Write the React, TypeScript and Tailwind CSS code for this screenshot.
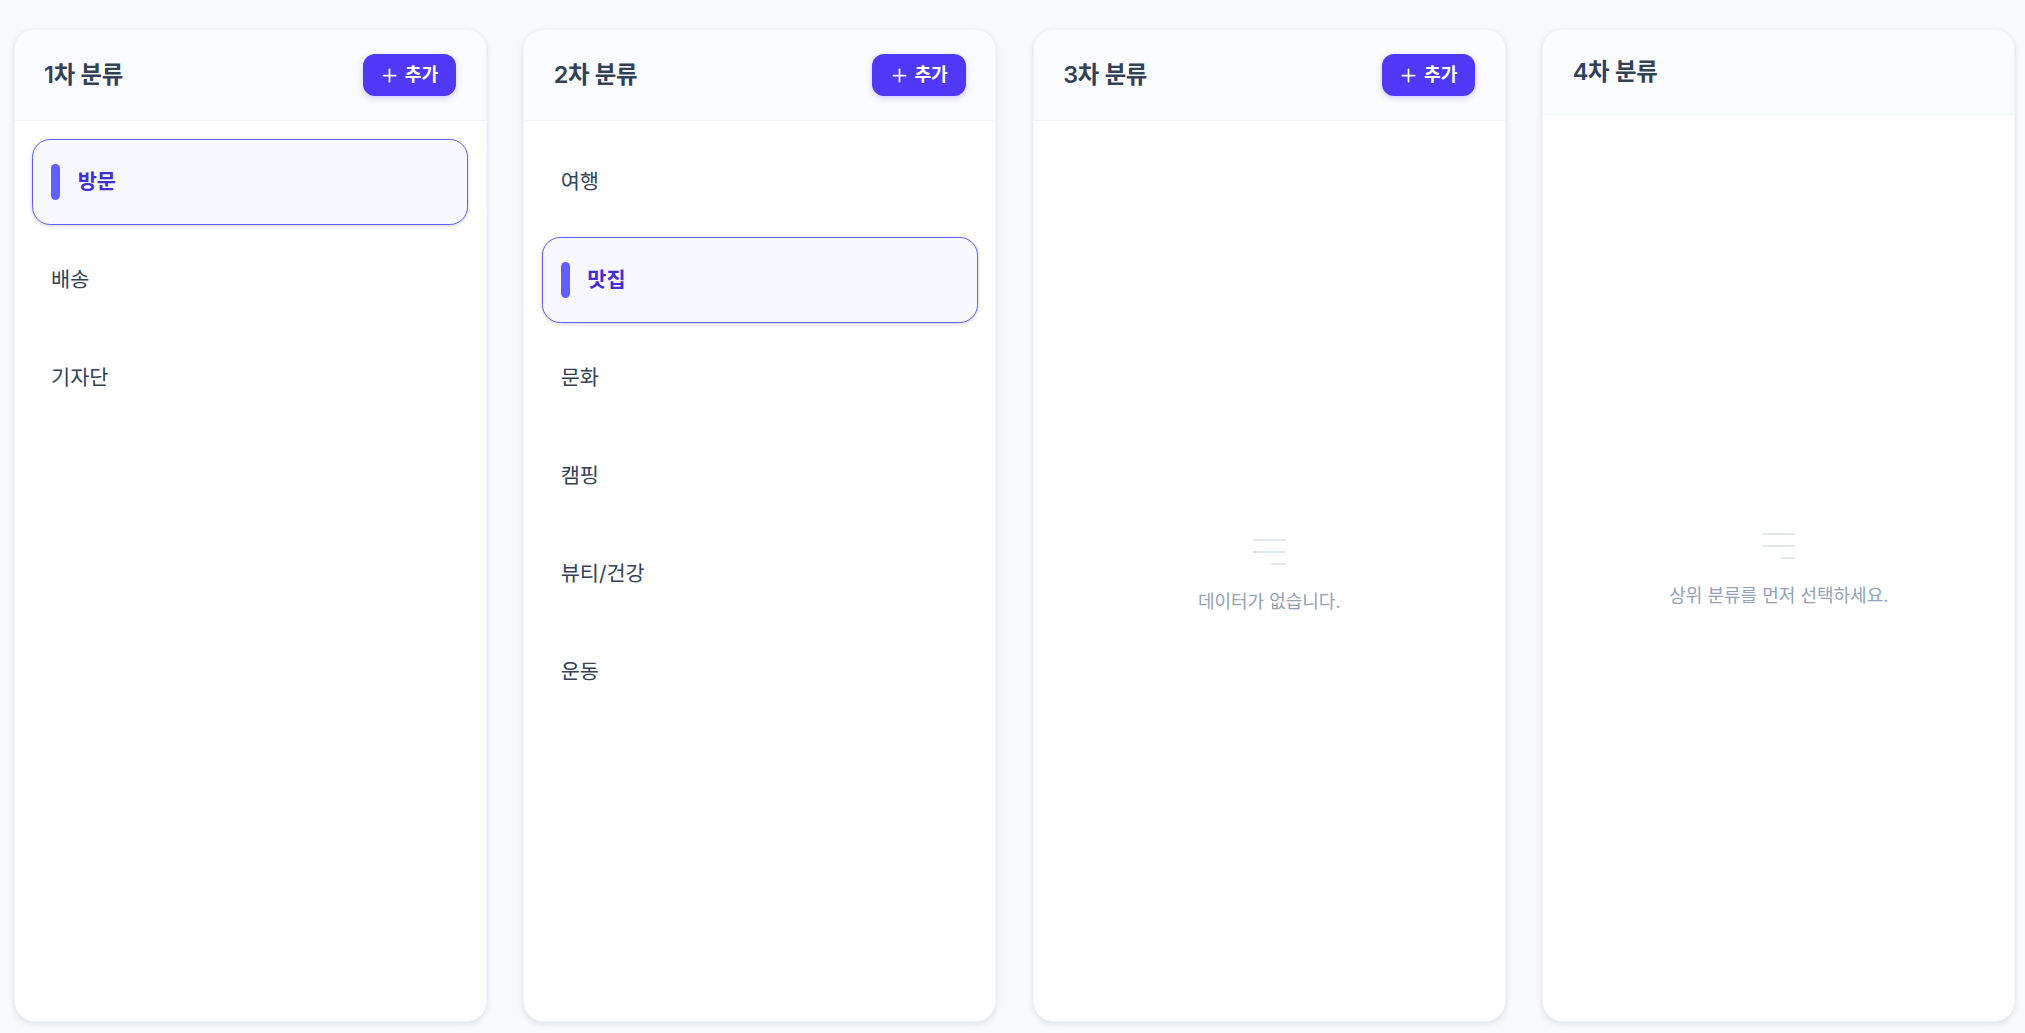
import { Plus } from 'lucide-react';

interface ColumnProps {
  title: string;
  items?: string[];
  selected?: string;
  emptyText?: string;
  canAdd?: boolean;
}

function EmptyIcon() {
  return (
    <svg width="48" height="48" viewBox="0 0 48 48" fill="none" stroke="#e2e8f0" strokeWidth="2">
      <path d="M8 12H40" />
      <path d="M8 24H40" />
      <path d="M26 36H40" />
    </svg>
  );
}

function Column({ title, items = [], selected, emptyText, canAdd = true }: ColumnProps) {
  return (
    <div className="flex h-full w-[473.2px] shrink-0 flex-col overflow-hidden rounded-[20.8px] border border-[#f1f5f9] bg-white shadow-[0_2px_6px_rgba(15,23,42,0.12)]">
      {/* Header */}
      <div
        className={`flex shrink-0 items-center justify-between border-b border-[#f1f5f9] bg-[#fbfcfe] px-[29.6px] ${
          canAdd ? 'h-[91px]' : 'h-[85px]'
        }`}
      >
        <h2 className="text-[23.4px] leading-[32px] font-semibold tracking-[-0.3px] text-[#314158]">{title}</h2>
        {canAdd && (
          <button className="flex h-[42px] w-[93.6px] items-center justify-center gap-[4.5px] rounded-[12px] bg-[#4f39f6] pr-[1px] text-[18.2px] font-semibold text-white shadow-[0_2px_6px_rgba(79,57,246,0.25)]">
            <Plus size={21} strokeWidth={2} />
            추가
          </button>
        )}
      </div>

      {/* List */}
      {items.length > 0 ? (
        <div className="flex flex-col gap-[12px] px-[17.6px] py-[18px]">
          {items.map((item) =>
            item === selected ? (
              <div
                key={item}
                className="flex h-[86px] items-center gap-[17.6px] rounded-[18.2px] border border-[#615fff] bg-[#f8f9ff] px-[18px] shadow-[0_1px_4px_rgba(0,0,0,0.18)]"
              >
                <span className="h-[36px] w-[9px] rounded-full bg-[#615fff]" />
                <span className="text-[20.8px] font-semibold text-[#432dd7]">{item}</span>
              </div>
            ) : (
              <div key={item} className="flex h-[86px] items-center px-[19px] text-[20.8px] text-[#314158]">
                {item}
              </div>
            ),
          )}
        </div>
      ) : (
        <div className="flex h-[900px] shrink-0 flex-col items-center justify-center gap-[12px]">
          <EmptyIcon />
          <p className="text-[18px] leading-[27px] text-[#90a1b9]">{emptyText}</p>
        </div>
      )}
    </div>
  );
}

export default function App() {
  return (
    <div className="flex h-screen gap-[36.4px] overflow-hidden bg-[#f8fafc] pt-[29px] pb-[11px] pl-[13.5px] font-['Inter','Noto_Sans_CJK_KR',sans-serif]">
      <Column title="1차 분류" items={['방문', '배송', '기자단']} selected="방문" />
      <Column
        title="2차 분류"
        items={['여행', '맛집', '문화', '캠핑', '뷰티/건강', '운동']}
        selected="맛집"
      />
      <Column title="3차 분류" emptyText="데이터가 없습니다." />
      <Column title="4차 분류" emptyText="상위 분류를 먼저 선택하세요." canAdd={false} />
    </div>
  );
}
